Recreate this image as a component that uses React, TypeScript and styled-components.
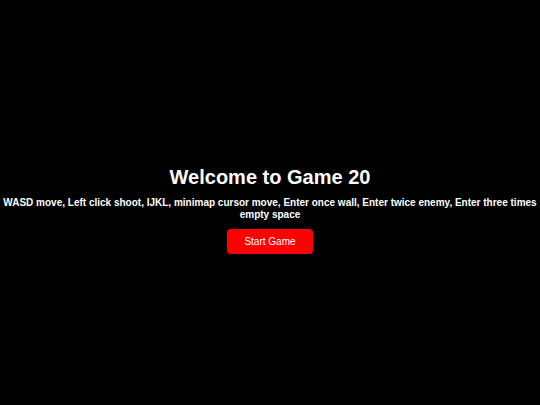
import React from 'react';
import styled, { createGlobalStyle } from 'styled-components';

const GlobalStyle = createGlobalStyle`
  html, body {
    margin: 0;
    padding: 0;
    background-color: #000000;
  }
  body {
    font-family: "Liberation Sans", Arial, sans-serif;
  }
`

const Screen = styled.div`
  width: 100%;
  height: 100vh;
  display: flex;
  flex-direction: column;
  align-items: center;
  justify-content: center;
  background-color: #000000;
  color: #ffffff;
  text-align: center;
  padding-top: 14px;
  box-sizing: border-box;
`

const Title = styled.h1`
  margin: 0 0 8px;
  font-size: 20px;
  font-weight: 700;
  line-height: 24px;
`

const Instructions = styled.p`
  margin: 0 0 8px;
  font-size: 10px;
  font-weight: 700;
  line-height: 12px;
`

const StartButton = styled.button`
  height: 25px;
  padding: 0 17px;
  border: none;
  border-radius: 4px;
  background-color: #ff0000;
  color: #ffffff;
  font-family: "Liberation Sans", Arial, sans-serif;
  font-size: 10px;
  cursor: pointer;
`

function App() {
  return (
    <>
      <GlobalStyle />
      <Screen>
        <Title>Welcome to Game 20</Title>
        <Instructions>
          WASD move, Left click shoot, IJKL, minimap cursor move, Enter once wall, Enter twice enemy, Enter three times empty space
        </Instructions>
        <StartButton>Start Game</StartButton>
      </Screen>
    </>
  );
}

export default App;
